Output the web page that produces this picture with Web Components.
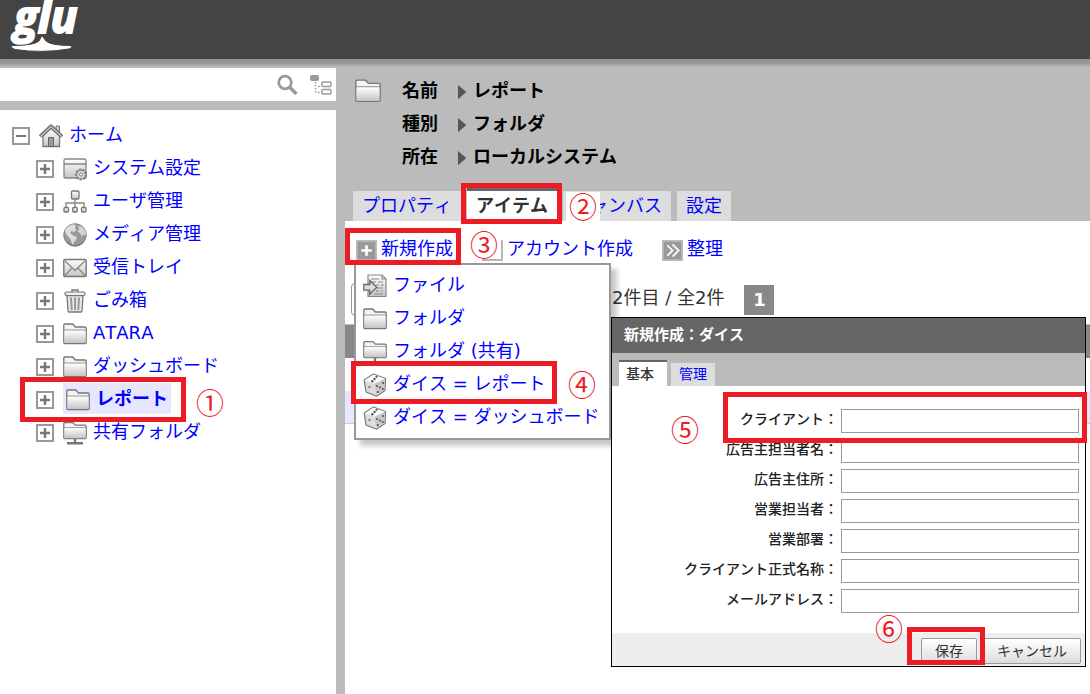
<!DOCTYPE html>
<html lang="ja">
<head>
<meta charset="utf-8">
<title>glu</title>
<style>
  html, body { margin: 0; }
  body {
    font: 18px/33px "DejaVu Sans", "Noto Sans CJK JP", sans-serif;
    font-kerning: none;
    color: #333;
    background: #bbb;
    --link: #0000ff;
    --mark: #ed1c24;
  }
</style>
</head>
<body>
<glu-app></glu-app>
<script>
const define = (name, html, setup) => {
  const template = document.createElement('template');
  template.innerHTML = html;
  customElements.define(name, class extends HTMLElement {
    constructor() {
      super();
      this.attachShadow({ mode: 'open' }).append(template.content.cloneNode(true));
    }
    connectedCallback() {
      if (setup && !this.ready) { this.ready = true; setup(this, this.shadowRoot); }
    }
  });
};

/* ---------- icons ---------- */
const GRADIENT = '<defs><linearGradient id="g" x1="0" y1="0" x2="0" y2="1"><stop offset="0" stop-color="#fff"/><stop offset="1" stop-color="#c4c4c4"/></linearGradient></defs>';
const FOLDER = '<path d="M.8 20.5V3q0-1 1-1h8l2.600 3H22q1.200 0 1.200 1.200V20.500q0 1-1 1H1.800q-1 0-1-1z" fill="#f4f4f4" stroke="#777" stroke-width="1.300"/><path d="M1.500 8.500h21V21h-21z" fill="url(#g)"/><path d="M1 8h22" stroke="#999"/>';
const DICE = '<path d="M10.500 1 22.500 5.500 22 17.500 13.500 23.200 3 19 1.200 7z" fill="#ddd" stroke="#777" stroke-width="1.200" stroke-linejoin="round"/><path d="M1.800 7.200 10.500 1.600 21.900 5.800 11.500 10.800z" fill="#fafafa"/><path d="M11.500 10.800 21.900 6 21.400 17.200 13.500 22.500z" fill="#c8c8c8"/><g fill="#555"><circle cx="13.500" cy="3.800" r="1.100"/><circle cx="11.500" cy="6" r="1.200"/><circle cx="9.300" cy="8.300" r="1.200"/><circle cx="6.500" cy="14" r="1.300" fill="#888"/><circle cx="14" cy="13" r="1.100"/><circle cx="20" cy="10" r="1.100"/><circle cx="17" cy="14.500" r="1.100"/><circle cx="14.800" cy="19" r="1.100"/><circle cx="19.800" cy="16" r="1.100"/></g>';
const ICONS = {
  minus: '<path d="M4 4h16v16H4z" fill="#fff" stroke="#999" stroke-width="2"/><path d="M7 12h10" stroke="#777" stroke-width="2"/>',
  plus: '<path d="M4 4h16v16H4z" fill="#fff" stroke="#999" stroke-width="2"/><path d="M7 12h10M12 7v10" stroke="#777" stroke-width="2.400"/>',
  home: '<path d="M17 2h3.500v7H17z" fill="#ccc" stroke="#777"/><path d="M4 12v10.500h16.500V12L12 4.500z" fill="url(#g)" stroke="#777" stroke-width="1.300"/><path d="M1 12.500 12 2l11.200 10.500" fill="none" stroke="#777" stroke-width="3.400" stroke-linejoin="round"/><path d="M1.500 12.500 12 2.600l10.700 9.900" fill="none" stroke="#eee" stroke-width="1"/><path d="M9.500 22.500V13.500h5v9z" fill="#999" stroke="#666"/>',
  system: '<path d="M1 20V3.500Q1 2 2.500 2h19Q23 2 23 3.500V21H2q-1 0-1-1z" fill="url(#g)" stroke="#888" stroke-width="1.300"/><path d="M1 7h22" stroke="#777" stroke-width="1.300"/><circle cx="18" cy="17.500" r="4.900" fill="#ddd" stroke="#777" stroke-width="2" stroke-dasharray="2.200 1.200"/><circle cx="18" cy="17.500" r="4.200" fill="#ddd" stroke="#888"/><circle cx="18" cy="17.500" r="1.600" fill="#fff" stroke="#777"/>',
  users: '<path d="M12 9v4M3 17v-4h18v4M12 13v4" fill="none" stroke="#888" stroke-width="1.400"/><g fill="url(#g)" stroke="#777" stroke-width="1.300"><rect x="8.500" y="1" width="7.500" height="8" rx="1"/><rect x="1" y="17.500" width="4.500" height="4.500" rx="1"/><rect x="9.700" y="17.500" width="4.500" height="4.500" rx="1"/><rect x="18.500" y="17.500" width="4.500" height="4.500" rx="1"/></g>',
  globe: '<circle cx="12" cy="12" r="11.300" fill="#999" stroke="#888"/><path d="M2 7.500Q5 2 10 1.200l3 1.300-1 2.500 1.500 2-3 2.500-1.500-2-2 2 3 3 4 1.500-1 3-2 2-.5 3.500Q8 20 7.500 16L3 11z" fill="#ddd"/><path d="M15 3l4 .5q4 4 4 9l-2.500-1L19 14l-2-4-3-1.500 2-2z" fill="#d4d4d4"/><path d="M4 19q8 7 16 0" stroke="#777" fill="none"/>',
  mail: '<rect x=".8" y="3.500" width="22.400" height="17" rx="1" fill="url(#g)" stroke="#777" stroke-width="1.400"/><path d="M1.500 4.500 12 14.500 22.500 4.500M1.500 20 9 12M22.500 20 15 12" fill="none" stroke="#888" stroke-width="1.300"/>',
  trash: '<path d="M4 6.500h16L19 22q-.1 1-1.200 1H6.200Q5.100 23 5 22z" fill="#e8e8e8" stroke="#777" stroke-width="1.300"/><path d="M8 8.500l.7 12.500M12 8.500V21M16 8.500 15.300 21" stroke="#999" stroke-width="2"/><path d="M9 3V1h6v2" fill="none" stroke="#777" stroke-width="1.300"/><rect x="2" y="3" width="20" height="3.500" rx="1.500" fill="#eee" stroke="#777" stroke-width="1.200"/>',
  folder: FOLDER,
  shared: '<g transform="scale(1 .82)">' + FOLDER + '</g><path d="M12 18v3.500M4 22.300h16" stroke="#777" stroke-width="2.400"/>',
  file: '<path d="M5 1h14l4 4v17.500H5z" fill="url(#g)" stroke="#888" stroke-width="1.200"/><path d="M19 1v4h4M8 5h8M8 8h5m2 0h5M13 11h3m2 0h3M14 14h6M13 17h3m2 0h2M11 20h9" fill="none" stroke="#888" stroke-width="1.200"/><path d="M.8 10.500h6V6.500l7 6.800-7 6.800v-4h-6z" fill="#ddd" stroke="#666" stroke-width="1.300"/>',
  dice: DICE,
  add: '<path d="M0 0h24v24H0z" fill="#bbb"/><path d="M2 2h20v20H2z" fill="#999"/><path d="M12 6v12M6 12h12" stroke="#fff" stroke-width="3"/>',
  more: '<path d="M0 0h24v24H0z" fill="#bbb"/><path d="M2 2h20v20H2z" fill="#999"/><path d="M6 6l6 6-6 6M12 5l7 7-7 7" fill="none" stroke="#fff" stroke-width="2"/>',
  search: '<circle cx="10" cy="9.500" r="6.300" fill="none" stroke="#999" stroke-width="2.800"/><path d="M14.500 14 21.500 21" stroke="#999" stroke-width="3.600"/>',
  outline: '<rect x="2" y="2" width="9" height="6" rx="2" fill="#999"/><path d="M7.500 9v12M10 13.500h2M10 19.500h2" stroke="#999" stroke-width="1.500" stroke-dasharray="1.500 1.500"/><rect x="14" y="9" width="9" height="4.500" rx="1" fill="none" stroke="#999" stroke-width="1.500"/><rect x="14" y="16.500" width="9" height="4.500" rx="1" fill="none" stroke="#999" stroke-width="1.500"/>',
  arrow: '<path d="M4 2.500l11 9.500L4 21.500z" fill="#555"/>'
};
define('glu-icon', `<style>
  :host { display: inline-flex; flex: none; width: 24px; height: 24px; }
  svg { width: 100%; height: 100%; }
</style><svg viewBox="0 0 24 24" aria-hidden="true"></svg>`, (el, root) => {
  root.querySelector('svg').innerHTML = GRADIENT + ICONS[el.getAttribute('name')];
});

/* ---------- header ---------- */
define('glu-header', `<style>
  :host { display: block; height: 59px; background: #444; }
  svg { display: block; width: 90px; height: 59px; }
  text { font: italic 700 44px "Open Sans", "Noto Sans", sans-serif; fill: #fff; stroke: #fff; stroke-width: 2; }
</style>
<svg viewBox="0 0 90 59" role="img"><text x="14" y="33">glu</text>
<path d="M12 45.500Q34 45.500 39 41L42 35.500 46 41Q51 45.500 71 45.500q2 2.500-2 3.500Q42 53.500 15 49.500q-5-2-3-4z" fill="#fff" stroke="#444" stroke-width="1"/></svg>`);

/* ---------- search ---------- */
define('search-bar', `<style>
  form { display: flex; align-items: center; height: 33px; padding-right: 4px; gap: 9px; background: #fff; }
  input { flex: 1; min-width: 0; height: 33px; box-sizing: border-box; border: 0; padding: 0 8px; font: inherit; outline: 0; }
  :host { display: block; }
  button { display: flex; padding: 0; border: 0; background: none; }
</style>
<form><input type="text" aria-label="検索">
<button type="button" aria-label="検索"><glu-icon name="search"></glu-icon></button>
<button type="button" aria-label="ツリー"><glu-icon name="outline"></glu-icon></button></form>`);

/* ---------- tree ---------- */
define('tree-item', `<style>
  :host { display: flex; align-items: center; height: 33px; padding-left: 33px; }
  :host([root]) { padding-left: 9px; }
  button { display: flex; padding: 2px 0 0; border: 0; background: none; }
  a { display: flex; align-items: center; gap: 6px; height: 31px; margin-left: 6px; color: var(--link); text-decoration: none; white-space: nowrap; }
  a glu-icon { padding-top: 3px; }
  :host([selected]) a { padding: 0 3px; background: #e6e6ff; font-weight: 700; }
</style>
<button type="button" aria-label="開閉"><glu-icon class="toggle"></glu-icon></button>
<a href="#"><glu-icon class="kind"></glu-icon><span><slot></slot></span></a>`, (el, root) => {
  const swap = (sel, name) => {
    const icon = document.createElement('glu-icon');
    icon.setAttribute('name', name);
    root.querySelector(sel).replaceWith(icon);
  };
  swap('.toggle', el.hasAttribute('root') ? 'minus' : 'plus');
  swap('.kind', el.getAttribute('icon'));
});
define('nav-tree', `<style>
  :host { display: block; padding-top: 8px; background: #fff; }
</style>
<tree-item root icon="home">ホーム</tree-item>
<tree-item icon="system">システム設定</tree-item>
<tree-item icon="users">ユーザ管理</tree-item>
<tree-item icon="globe">メディア管理</tree-item>
<tree-item icon="mail">受信トレイ</tree-item>
<tree-item icon="trash">ごみ箱</tree-item>
<tree-item icon="folder">ATARA</tree-item>
<tree-item icon="folder">ダッシュボード</tree-item>
<tree-item icon="folder" selected>レポート</tree-item>
<tree-item icon="shared">共有フォルダ</tree-item>`);

/* ---------- item summary ---------- */
define('item-summary', `<style>
  :host { display: flex; gap: 21px; padding: 15px 0 0 20px; color: #000; font-weight: 700; }
  .kind { margin-top: 4px; width: 26px; height: 26px; }
  dl { display: grid; grid-template-columns: 53px auto; margin: 0; }
  dt, dd { margin: 0; }
  dd { display: flex; align-items: center; }
  dd glu-icon { width: 18px; height: 18px; padding-top: 3px; }
</style>
<glu-icon class="kind" name="folder"></glu-icon>
<dl>
  <dt>名前</dt><dd><glu-icon name="arrow"></glu-icon>レポート</dd>
  <dt>種別</dt><dd><glu-icon name="arrow"></glu-icon>フォルダ</dd>
  <dt>所在</dt><dd><glu-icon name="arrow"></glu-icon>ローカルシステム</dd>
</dl>`);

/* ---------- tabs ---------- */
define('tab-link', `<style>
  :host { display: block; }
  a { display: block; padding: 0 var(--tab-pad, 9px); line-height: var(--tab-height, 30px); background: #ddd; color: var(--link); text-decoration: none; white-space: nowrap; }
  :host([selected]) a { border-top: var(--tab-edge, 3px) solid #666; background: #fff; color: #333; font-weight: var(--tab-weight, 700); }
</style><a href="#"><slot></slot></a>`);
define('tab-bar', `<style>
  :host { display: flex; align-items: flex-end; gap: var(--tab-gap, 6px); }
</style><slot></slot>`);

/* ---------- toolbar ---------- */
define('tool-link', `<style>
  a { display: flex; align-items: center; gap: 4px; color: var(--link); text-decoration: none; white-space: nowrap; }
  :host { display: block; }
</style><a href="#"><slot name="icon"></slot><slot></slot></a>`);

/* ---------- item list ---------- */
define('item-list', `<style>
  :host { display: block; padding-top: 11px; background: #fff; }
  nav { display: flex; gap: 29px; padding-left: 11px; }
  tool-link glu-icon { width: 21px; height: 21px; padding-top: 3px; }
  .pager { display: flex; align-items: center; padding: 18px 0 8px 6px; }
  select { appearance: none; width: 252px; height: 33px; box-sizing: border-box; border: 1px solid #999; border-radius: 4px; background: #fff; font: inherit; }
  .count { margin: 0 20px 0 9px; padding-bottom: 4px; line-height: 29px; white-space: nowrap; }
  button { width: 30px; height: 30px; padding: 0; border: 0; background: #888; color: #fff; font: inherit; font-weight: 700; line-height: 30px; }
  table { width: 100%; border-collapse: collapse; }
  th, td { height: 33px; padding: 0; box-sizing: border-box; }
  th { background: #888; border-top: 1px solid #bbb; }
  tr:last-child td { background: #e6e6ff; border-bottom: 1px solid #ccc; }
</style>
<nav>
  <tool-link><glu-icon slot="icon" name="add"></glu-icon>新規作成</tool-link>
  <tool-link><glu-icon slot="icon" name="add"></glu-icon>アカウント作成</tool-link>
  <tool-link><glu-icon slot="icon" name="more"></glu-icon>整理</tool-link>
</nav>
<div class="pager">
  <select aria-label="表示件数"></select>
  <span class="count">2件目 / 全2件</span>
  <button type="button">1</button>
</div>
<table><thead><tr><th></th></tr></thead><tbody><tr><td></td></tr><tr><td></td></tr></tbody></table>`);

/* ---------- creation menu ---------- */
define('menu-link', `<style>
  :host { display: block; }
  a { display: flex; align-items: center; gap: 6px; color: var(--link); text-decoration: none; white-space: nowrap; }
</style><a href="#"><slot name="icon"></slot><slot></slot></a>`);
define('create-menu', `<style>
  :host { display: block; box-sizing: border-box; width: 257px; padding: 3px 7px 5px; border: 2px solid #999; background: #fff; box-shadow: 6px 6px 5px rgba(0,0,0,.22); }
  glu-icon { padding-top: 3px; }
</style>
<menu-link><glu-icon slot="icon" name="file"></glu-icon>ファイル</menu-link>
<menu-link><glu-icon slot="icon" name="folder"></glu-icon>フォルダ</menu-link>
<menu-link><glu-icon slot="icon" name="shared"></glu-icon>フォルダ (共有)</menu-link>
<menu-link><glu-icon slot="icon" name="dice"></glu-icon>ダイス = レポート</menu-link>
<menu-link><glu-icon slot="icon" name="dice"></glu-icon>ダイス = ダッシュボード</menu-link>`);

/* ---------- creation dialog ---------- */
define('form-field', `<style>
  :host { display: block; }
  label { display: flex; align-items: center; justify-content: flex-end; gap: 3px; height: 30px; color: #222; font-weight: 500; }
  span { padding-bottom: 4px; white-space: nowrap; }
  input { width: 238px; height: 24px; box-sizing: border-box; border: 1px solid #999; background: #fff; font: inherit; }
</style><label><span><slot></slot></span><input type="text"></label>`);
define('create-dialog', `<style>
  :host { display: block; box-sizing: border-box; width: 475px; border: 1px solid #000; background: #fff; font-size: 14px; }
  h2 { margin: 0; padding-left: 12px; background: #666; color: #fff; font-size: 15px; line-height: 35px; }
  tab-bar { height: 33px; padding-left: 7px; background: #bbb; --tab-gap: 4px; --tab-pad: 8px; --tab-height: 23px; --tab-edge: 2px; --tab-weight: 500; }
  tab-link[selected] { --tab-pad: 13px 0 7px; --tab-height: 24px; }
  form { padding: 20px 6px 17px; }
  footer { display: flex; justify-content: flex-end; gap: 6px; padding: 5px 4px 2px; background: #eee; }
  button { height: 26px; padding: 0 13px; border: 1px solid #999; border-radius: 2px; background: linear-gradient(#fff, #ddd); color: #333; font: inherit; font-kerning: none; line-height: 24px; }
</style>
<h2>新規作成：ダイス</h2>
<tab-bar><tab-link selected>基本</tab-link><tab-link>管理</tab-link></tab-bar>
<form>
  <form-field>クライアント：</form-field>
  <form-field>広告主担当者名：</form-field>
  <form-field>広告主住所：</form-field>
  <form-field>営業担当者：</form-field>
  <form-field>営業部署：</form-field>
  <form-field>クライアント正式名称：</form-field>
  <form-field>メールアドレス：</form-field>
</form>
<footer><button type="button">保存</button><button type="button">キャンセル</button></footer>`);

/* ---------- numbered callouts ---------- */
define('mark-box', `<style>
  :host { position: absolute; box-sizing: border-box; border: 5px solid var(--mark); pointer-events: none; }
</style>`);
define('mark-number', `<style>
  :host { position: absolute; display: grid; place-items: center; width: 34px; height: 29px; color: var(--mark); font: 28px/29px "Noto Sans CJK JP", sans-serif; pointer-events: none; }
  :host([plate]) { background: #fff; }
</style><slot></slot>`);

/* ---------- page ---------- */
define('glu-app', `<style>
  :host { display: grid; position: relative; grid-template: auto 1fr / 336px minmax(0, 1fr); min-height: 100vh; overflow: hidden; }
  glu-header { grid-column: 1 / -1; }
  aside, main { display: flex; flex-direction: column; padding-top: 9px; background: linear-gradient(#939393, #979797 4px, #bbb 8px); }
  aside { gap: 9px; }
  nav-tree, item-list { flex: 1; }
  main { padding: 0 0 0 9px; }
  item-summary { padding-left: 10px; }
  .tabs { padding: 15px 0 0 8px; }
  create-menu, create-dialog { position: absolute; }
  create-menu { left: 354px; top: 263px; }
  create-dialog { left: 611px; top: 317px; }
</style>
<glu-header></glu-header>
<aside><search-bar></search-bar><nav-tree></nav-tree></aside>
<main>
  <item-summary></item-summary>
  <tab-bar class="tabs">
    <tab-link>プロパティ</tab-link><tab-link selected>アイテム</tab-link><tab-link>キャンバス</tab-link><tab-link>設定</tab-link>
  </tab-bar>
  <item-list></item-list>
</main>
<create-menu></create-menu>
<create-dialog></create-dialog>
<mark-box style="left:20px;top:377px;width:166px;height:45px"></mark-box>
<mark-box style="left:461px;top:183px;width:101px;height:41px"></mark-box>
<mark-box style="left:345px;top:228px;width:116px;height:37px"></mark-box>
<mark-box style="left:351px;top:361px;width:206px;height:43px"></mark-box>
<mark-box style="left:723px;top:392px;width:364px;height:51px"></mark-box>
<mark-box style="left:907px;top:627px;width:78px;height:38px"></mark-box>
<mark-number style="left:193px;top:388px">①</mark-number>
<mark-number plate style="left:566px;top:192px">②</mark-number>
<mark-number plate style="left:467px;top:230px">③</mark-number>
<mark-number style="left:565px;top:370px">④</mark-number>
<mark-number style="left:668px;top:415px">⑤</mark-number>
<mark-number style="left:872px;top:614px">⑥</mark-number>`);
</script>
</body>
</html>
